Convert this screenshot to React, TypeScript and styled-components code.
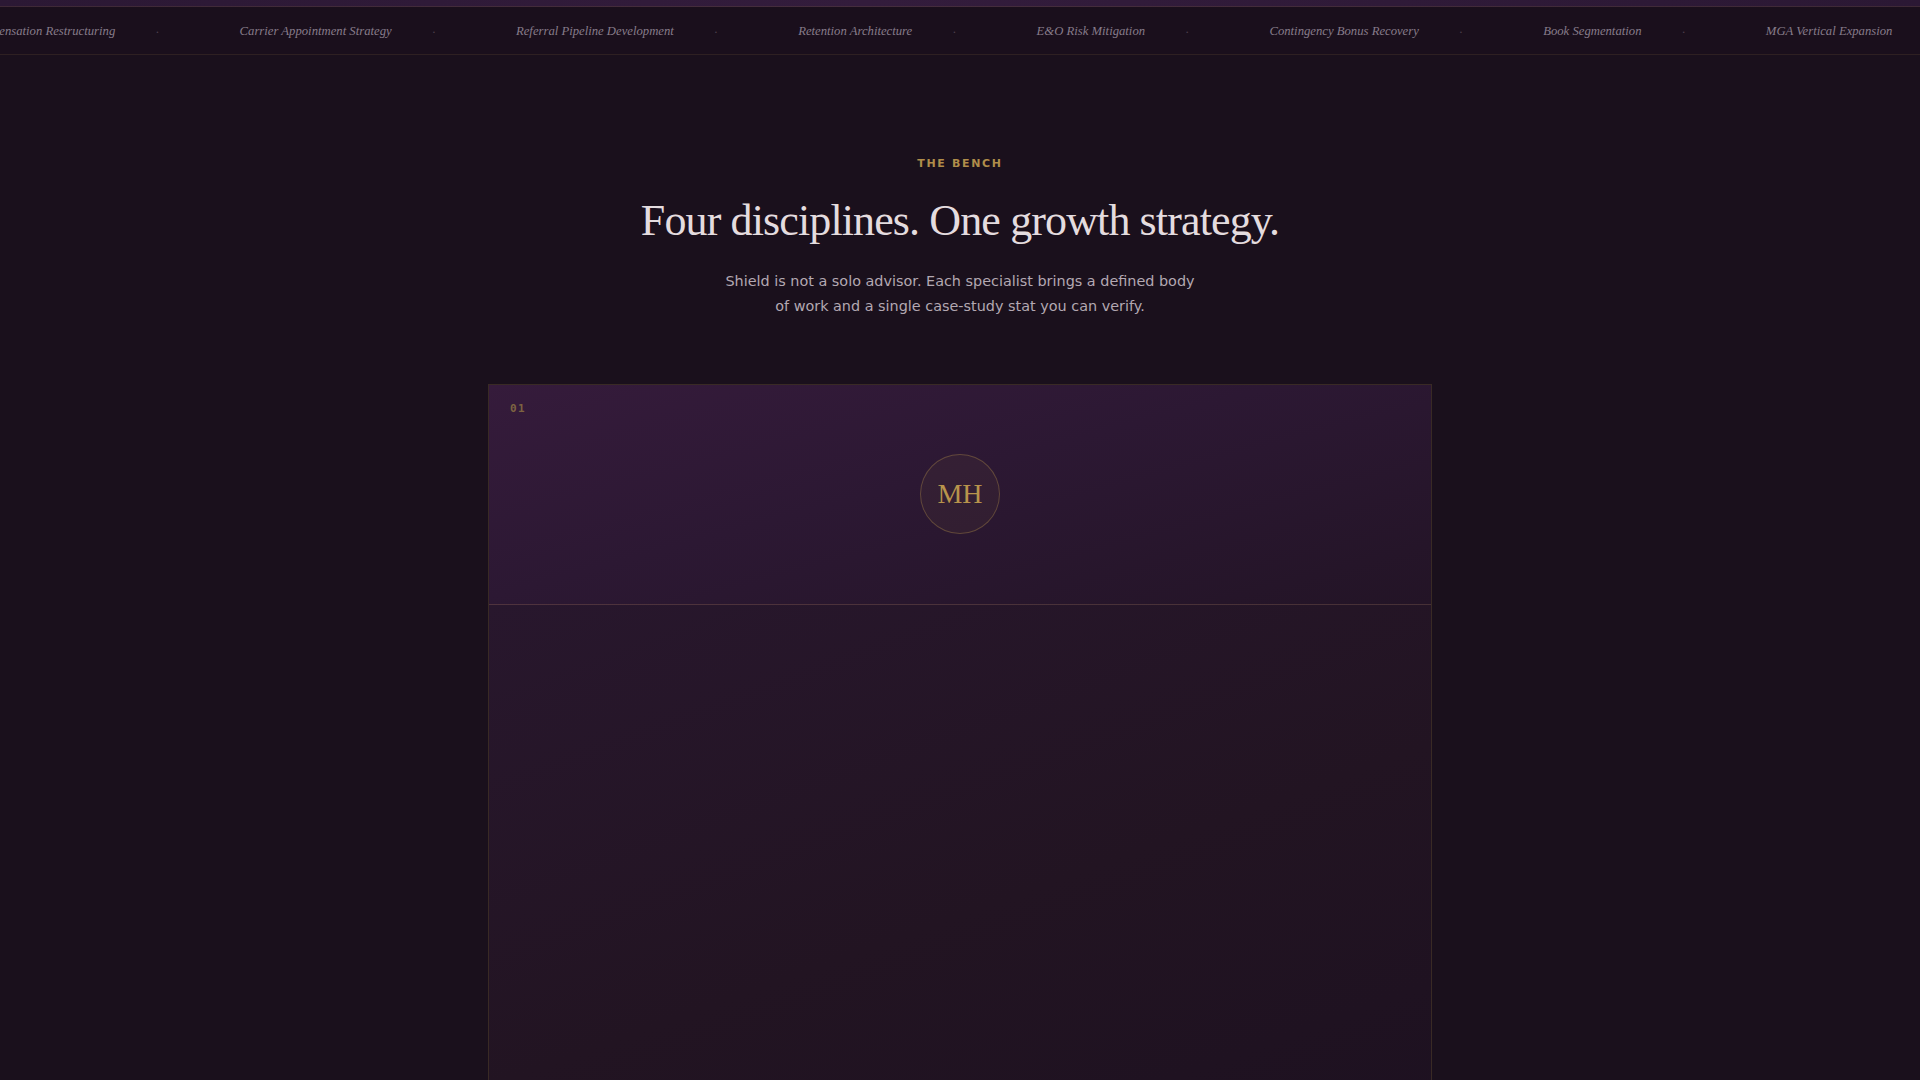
import React from "react"
import styled, { createGlobalStyle } from "styled-components"

const GlobalStyle = createGlobalStyle`
    html, body {
        margin: 0;
        padding: 0;
        background: #1a101c;
    }
    * {
        box-sizing: border-box;
    }
`

const Page = styled.div`
    min-height: 100vh;
    background: #1a101c;
    overflow: hidden;
`

const TopStrip = styled.div`
    height: 7px;
    background: linear-gradient(90deg, #2b1834 0%, #331c3c 45%, #2b1834 100%);
    border-bottom: 1px solid rgba(184, 149, 74, 0.14);
`

const Ticker = styled.div`
    height: 48px;
    padding-top: 2px;
    display: flex;
    align-items: center;
    overflow: hidden;
    background: #1a0f1c;
    border-bottom: 1px solid rgba(184, 149, 74, 0.13);
`

// marquee track, frozen at its current scroll offset
const Track = styled.div<{ $offset: number }>`
    display: flex;
    align-items: center;
    white-space: nowrap;
    transform: translateX(${(p) => -p.$offset}px);
`

const TickerItem = styled.span`
    font-family: "Liberation Serif", "Times New Roman", serif;
    font-style: italic;
    font-size: 12.7px;
    color: #877c8a;
    padding-right: 40px;
`

const Dot = styled.span`
    font-family: "Liberation Serif", serif;
    font-size: 13px;
    color: #4e3f4c;
    margin-right: 80px;
`

const Section = styled.section`
    display: flex;
    flex-direction: column;
    align-items: center;
    padding: 101px 24px 0;
`

const Eyebrow = styled.div`
    font-family: "DejaVu Sans", sans-serif;
    font-weight: 700;
    font-size: 11px;
    letter-spacing: 0.15em;
    line-height: 16px;
    color: #b08d4a;
    text-transform: uppercase;
`

const Title = styled.h2`
    margin: 24px 0 0;
    font-family: "Liberation Serif", "Times New Roman", serif;
    font-weight: 400;
    font-size: 44px;
    line-height: 1.15;
    letter-spacing: -0.02em;
    color: #e4dcdf;
`

const Lead = styled.p`
    margin: 22px 0 0;
    max-width: 480px;
    text-align: center;
    font-family: "DejaVu Sans", sans-serif;
    font-size: 14.4px;
    line-height: 25px;
    color: #b3a8b2;
`

const Card = styled.article`
    width: 944px;
    margin-top: 65px;
    border: 1px solid rgba(184, 149, 74, 0.2);
    border-bottom: none;
    display: flex;
    flex-direction: column;
`

const CardHead = styled.header`
    position: relative;
    height: 220px;
    display: flex;
    align-items: center;
    justify-content: center;
    background: linear-gradient(165deg, #351b3b 0%, #2c1833 45%, #231426 100%);
    border-bottom: 1px solid rgba(184, 149, 74, 0.2);
`

const Index = styled.span`
    position: absolute;
    top: 17px;
    left: 21px;
    font-family: "DejaVu Sans Mono", monospace;
    font-weight: 700;
    font-size: 11px;
    letter-spacing: 0.12em;
    color: #7d6341;
`

const Avatar = styled.div`
    width: 80px;
    height: 80px;
    border-radius: 50%;
    display: flex;
    align-items: center;
    justify-content: center;
    border: 1px solid rgba(184, 149, 74, 0.35);
    background: rgba(184, 149, 74, 0.06);
    font-family: "Liberation Serif", "Times New Roman", serif;
    font-size: 28px;
    color: #b8944c;
`

const CardBody = styled.div`
    min-height: 620px;
    background: linear-gradient(160deg, #28172d 0%, #221422 50%, #1c1020 100%);
`

const services = [
    "Compensation Restructuring",
    "Carrier Appointment Strategy",
    "Referral Pipeline Development",
    "Retention Architecture",
    "E&O Risk Mitigation",
    "Contingency Bonus Recovery",
    "Book Segmentation",
    "MGA Vertical Expansion",
]

export default function App() {
    return (
        <Page>
            <GlobalStyle />
            <TopStrip />
            <Ticker>
                <Track $offset={31}>
                    {services.concat(services).map((s, i) => (
                        <React.Fragment key={i}>
                            <TickerItem>{s}</TickerItem>
                            <Dot>·</Dot>
                        </React.Fragment>
                    ))}
                </Track>
            </Ticker>
            <Section>
                <Eyebrow>The Bench</Eyebrow>
                <Title>Four disciplines. One growth strategy.</Title>
                <Lead>
                    Shield is not a solo advisor. Each specialist brings a defined body of work and a single
                    case-study stat you can verify.
                </Lead>
                <Card>
                    <CardHead>
                        <Index>01</Index>
                        <Avatar>MH</Avatar>
                    </CardHead>
                    <CardBody />
                </Card>
            </Section>
        </Page>
    )
}
